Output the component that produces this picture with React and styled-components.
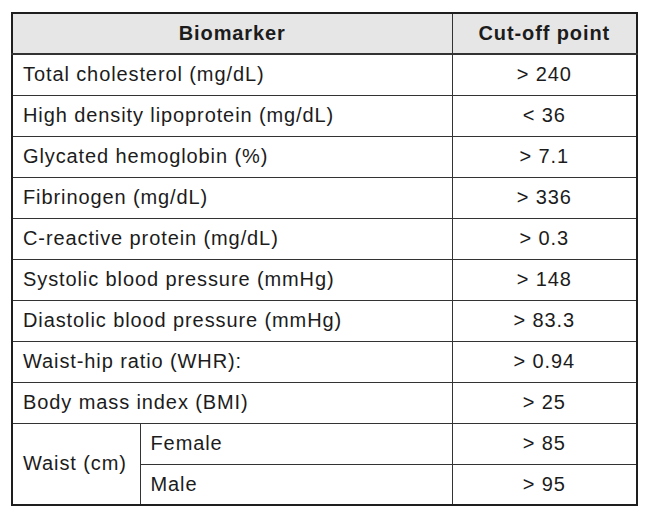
import React from "react";
import styled, { createGlobalStyle } from "styled-components";

const GlobalStyle = createGlobalStyle`
  body {
    margin: 0;
    background: #fff;
    font-family: "Liberation Sans", Arial, sans-serif;
    color: #1c1c1c;
  }
`;

const Page = styled.div`
  padding: 12px 0 0 11px;
`;

const Table = styled.table`
  width: 625px;
  table-layout: fixed;
  border-collapse: collapse;
  border: 2px solid #1e1e1e;
  font-size: 20px;
  letter-spacing: 0.9px;
`;

const HeadCell = styled.th`
  height: 39px;
  padding: 0;
  background: #e6e6e6;
  font-weight: bold;
  text-align: center;
  border-left: 1px solid #333;
  border-bottom: 2px solid #333;
`;

const Row = styled.tr`
  height: 41px;
`;

const Cell = styled.td`
  padding: 0 10px;
  border: 1px solid #333;
  text-align: ${(p) => (p.$center ? "center" : "left")};
  vertical-align: middle;
  white-space: nowrap;
`;

const rows = [
  ["Total cholesterol (mg/dL)", "> 240"],
  ["High density lipoprotein (mg/dL)", "< 36"],
  ["Glycated hemoglobin (%)", "> 7.1"],
  ["Fibrinogen (mg/dL)", "> 336"],
  ["C-reactive protein (mg/dL)", "> 0.3"],
  ["Systolic blood pressure (mmHg)", "> 148"],
  ["Diastolic blood pressure (mmHg)", "> 83.3"],
  ["Waist-hip ratio (WHR):", "> 0.94"],
  ["Body mass index (BMI)", "> 25"],
];

export default function App() {
  return (
    <Page>
      <GlobalStyle />
      <Table>
        <colgroup>
          <col style={{ width: 128 }} />
          <col style={{ width: 312 }} />
          <col style={{ width: 185 }} />
        </colgroup>
        <thead>
          <tr>
            <HeadCell colSpan={2}>Biomarker</HeadCell>
            <HeadCell>Cut-off point</HeadCell>
          </tr>
        </thead>
        <tbody>
          {rows.map(([label, value]) => (
            <Row key={label}>
              <Cell colSpan={2}>{label}</Cell>
              <Cell $center>{value}</Cell>
            </Row>
          ))}
          <Row>
            <Cell rowSpan={2}>Waist (cm)</Cell>
            <Cell>Female</Cell>
            <Cell $center>&gt; 85</Cell>
          </Row>
          <Row>
            <Cell>Male</Cell>
            <Cell $center>&gt; 95</Cell>
          </Row>
        </tbody>
      </Table>
    </Page>
  );
}
